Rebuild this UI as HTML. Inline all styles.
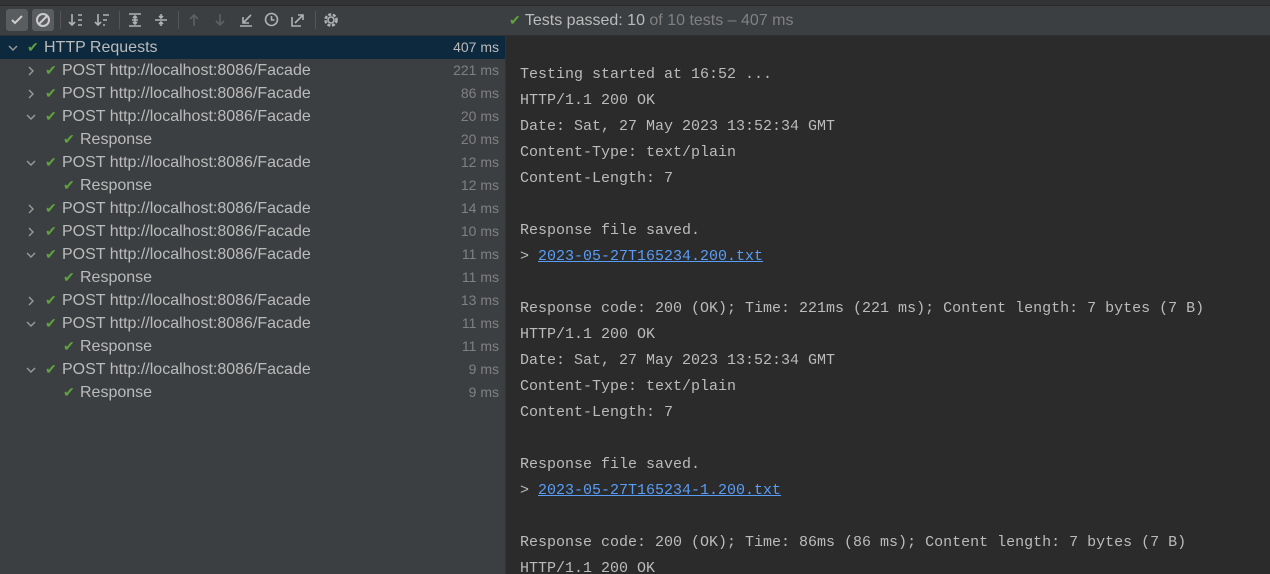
<!DOCTYPE html>
<html style="margin:0;width:1270px;height:574px;overflow:hidden"><head><style>
body{margin:0;width:1270px;height:574px;overflow:hidden;background:#2b2b2b;font-family:"Liberation Sans",sans-serif;position:relative}
.top{position:absolute;left:0;top:0;width:1270px;height:5px;background:#313335;border-bottom:1px solid #2b2b2b}
.tb{position:absolute;left:0;top:6px;width:1270px;height:29px;background:#3c3f41;border-bottom:1px solid #323232}
.left{position:absolute;left:0;top:36px;width:505px;height:538px;background:#3c3f41;border-right:1px solid #323232}
.row{position:absolute;left:0;width:505px;height:23px;font-size:16px;color:#bbbbbb;line-height:23px}
.row .t{position:absolute;right:6px;font-size:14px;color:#808080}
.sel{background:#0d293e}
.sel .t{color:#bbbbbb}
.chk{color:#5fa33e;font-size:14px;position:absolute}
.r{position:absolute;top:7px}
.d{position:absolute;top:8px}
.con{position:absolute;left:520px;top:62px;font-family:"Liberation Mono",monospace;font-size:15px;color:#bbbbbb;line-height:26px;white-space:pre}
a{color:#589df6;text-decoration:underline}
.btn{position:absolute;top:9px;width:22px;height:22px;border-radius:3px;background:#5a5d5f}
.sep{position:absolute;top:11px;width:1px;height:18px;background:#555}
svg.i{position:absolute;top:12px}
svg.i *{stroke:#afb1b3;stroke-width:1.6;fill:none}
</style></head><body>
<div class="top"></div>
<div class="tb"></div>
<div class="btn" style="left:6px"></div><svg style="position:absolute;left:9px;top:13px" width="16" height="14"><path d="M3 7l3 3 7-7" stroke="#ccc" stroke-width="2" fill="none"/></svg>
<div class="btn" style="left:32px"></div><svg style="position:absolute;left:35px;top:12px" width="16" height="16"><circle cx="8" cy="8" r="6" stroke="#ccc" stroke-width="2" fill="none"/><path d="M4 12L12 4" stroke="#ccc" stroke-width="2"/></svg>
<div class="sep" style="left:60px"></div>
<svg class="i" style="left:68px" width="16" height="16"><path d="M4 2v11M1 10l3 3 3-3M10 3h4M10 8h4M10 13h4"/></svg>
<svg class="i" style="left:94px" width="16" height="16"><path d="M4 2v11M1 10l3 3 3-3M9 3h6M9 8h4M9 13h2"/></svg>
<div class="sep" style="left:119px"></div>
<svg class="i" style="left:127px" width="16" height="16"><path d="M2 2h12M2 14h12M5 8h6M8 4v8M6 6l2-2 2 2M6 10l2 2 2-2"/></svg>
<svg class="i" style="left:153px" width="16" height="16"><path d="M2 8h12M8 2v4M6 4l2 2 2-2M8 14v-4M6 12l2-2 2 2"/></svg>
<div class="sep" style="left:178px"></div>
<svg class="i" style="left:186px" width="16" height="16"><path d="M8 14V3M4 7l4-4 4 4" style="stroke:#5e6163"/></svg>
<svg class="i" style="left:212px" width="16" height="16"><path d="M8 2v11M4 9l4 4 4-4" style="stroke:#5e6163"/></svg>
<svg class="i" style="left:238px" width="16" height="16"><path d="M13 3L5 11M5 5v6h6M2 14h12"/></svg>
<svg class="i" style="left:264px" width="16" height="16"><circle cx="7.5" cy="7.5" r="6"/><path d="M7.5 4v4h3"/></svg>
<svg class="i" style="left:290px" width="16" height="16"><path d="M5 11l8-8M8 3h5v5M2 5v9h9"/></svg>
<div class="sep" style="left:315px"></div>
<svg class="i" style="left:323px" width="18" height="18"><circle cx="8" cy="8" r="3"/><circle cx="8" cy="8" r="5.5" style="stroke-dasharray:3 1.6;stroke-width:2.6"/></svg>
<div style="position:absolute;left:509px;top:12px;font-size:16px;color:#bbbbbb"><span style="color:#5fa33e;font-size:14px">✔</span> Tests passed: 10 <span style="color:#808080">of 10 tests – 407 ms</span></div>
<div class="left"></div>
<div class="row sel" style="top:36px"><svg class="d" style="left:8px" width="10" height="8"><path d="M1 2l4 4 4-4" stroke="#9a9a9a" stroke-width="1.4" fill="none"/></svg><span class="chk" style="left:27px">✔</span><span style="position:absolute;left:44px">HTTP Requests</span><span class="t">407 ms</span></div>
<div class="row" style="top:59px"><svg class="r" style="left:27px" width="8" height="10"><path d="M2 1l4 4-4 4" stroke="#9a9a9a" stroke-width="1.4" fill="none"/></svg><span class="chk" style="left:45px">✔</span><span style="position:absolute;left:62px">POST http://localhost:8086/Facade</span><span class="t">221 ms</span></div>
<div class="row" style="top:82px"><svg class="r" style="left:27px" width="8" height="10"><path d="M2 1l4 4-4 4" stroke="#9a9a9a" stroke-width="1.4" fill="none"/></svg><span class="chk" style="left:45px">✔</span><span style="position:absolute;left:62px">POST http://localhost:8086/Facade</span><span class="t">86 ms</span></div>
<div class="row" style="top:105px"><svg class="d" style="left:26px" width="10" height="8"><path d="M1 2l4 4 4-4" stroke="#9a9a9a" stroke-width="1.4" fill="none"/></svg><span class="chk" style="left:45px">✔</span><span style="position:absolute;left:62px">POST http://localhost:8086/Facade</span><span class="t">20 ms</span></div>
<div class="row" style="top:128px"><span class="chk" style="left:63px">✔</span><span style="position:absolute;left:80px">Response</span><span class="t">20 ms</span></div>
<div class="row" style="top:151px"><svg class="d" style="left:26px" width="10" height="8"><path d="M1 2l4 4 4-4" stroke="#9a9a9a" stroke-width="1.4" fill="none"/></svg><span class="chk" style="left:45px">✔</span><span style="position:absolute;left:62px">POST http://localhost:8086/Facade</span><span class="t">12 ms</span></div>
<div class="row" style="top:174px"><span class="chk" style="left:63px">✔</span><span style="position:absolute;left:80px">Response</span><span class="t">12 ms</span></div>
<div class="row" style="top:197px"><svg class="r" style="left:27px" width="8" height="10"><path d="M2 1l4 4-4 4" stroke="#9a9a9a" stroke-width="1.4" fill="none"/></svg><span class="chk" style="left:45px">✔</span><span style="position:absolute;left:62px">POST http://localhost:8086/Facade</span><span class="t">14 ms</span></div>
<div class="row" style="top:220px"><svg class="r" style="left:27px" width="8" height="10"><path d="M2 1l4 4-4 4" stroke="#9a9a9a" stroke-width="1.4" fill="none"/></svg><span class="chk" style="left:45px">✔</span><span style="position:absolute;left:62px">POST http://localhost:8086/Facade</span><span class="t">10 ms</span></div>
<div class="row" style="top:243px"><svg class="d" style="left:26px" width="10" height="8"><path d="M1 2l4 4 4-4" stroke="#9a9a9a" stroke-width="1.4" fill="none"/></svg><span class="chk" style="left:45px">✔</span><span style="position:absolute;left:62px">POST http://localhost:8086/Facade</span><span class="t">11 ms</span></div>
<div class="row" style="top:266px"><span class="chk" style="left:63px">✔</span><span style="position:absolute;left:80px">Response</span><span class="t">11 ms</span></div>
<div class="row" style="top:289px"><svg class="r" style="left:27px" width="8" height="10"><path d="M2 1l4 4-4 4" stroke="#9a9a9a" stroke-width="1.4" fill="none"/></svg><span class="chk" style="left:45px">✔</span><span style="position:absolute;left:62px">POST http://localhost:8086/Facade</span><span class="t">13 ms</span></div>
<div class="row" style="top:312px"><svg class="d" style="left:26px" width="10" height="8"><path d="M1 2l4 4 4-4" stroke="#9a9a9a" stroke-width="1.4" fill="none"/></svg><span class="chk" style="left:45px">✔</span><span style="position:absolute;left:62px">POST http://localhost:8086/Facade</span><span class="t">11 ms</span></div>
<div class="row" style="top:335px"><span class="chk" style="left:63px">✔</span><span style="position:absolute;left:80px">Response</span><span class="t">11 ms</span></div>
<div class="row" style="top:358px"><svg class="d" style="left:26px" width="10" height="8"><path d="M1 2l4 4 4-4" stroke="#9a9a9a" stroke-width="1.4" fill="none"/></svg><span class="chk" style="left:45px">✔</span><span style="position:absolute;left:62px">POST http://localhost:8086/Facade</span><span class="t">9 ms</span></div>
<div class="row" style="top:381px"><span class="chk" style="left:63px">✔</span><span style="position:absolute;left:80px">Response</span><span class="t">9 ms</span></div>
<div class="con">Testing started at 16:52 ...
HTTP/1.1 200 OK
Date: Sat, 27 May 2023 13:52:34 GMT
Content-Type: text/plain
Content-Length: 7

Response file saved.
&gt; <a>2023-05-27T165234.200.txt</a>

Response code: 200 (OK); Time: 221ms (221 ms); Content length: 7 bytes (7 B)
HTTP/1.1 200 OK
Date: Sat, 27 May 2023 13:52:34 GMT
Content-Type: text/plain
Content-Length: 7

Response file saved.
&gt; <a>2023-05-27T165234-1.200.txt</a>

Response code: 200 (OK); Time: 86ms (86 ms); Content length: 7 bytes (7 B)
HTTP/1.1 200 OK</div>
</body></html>
